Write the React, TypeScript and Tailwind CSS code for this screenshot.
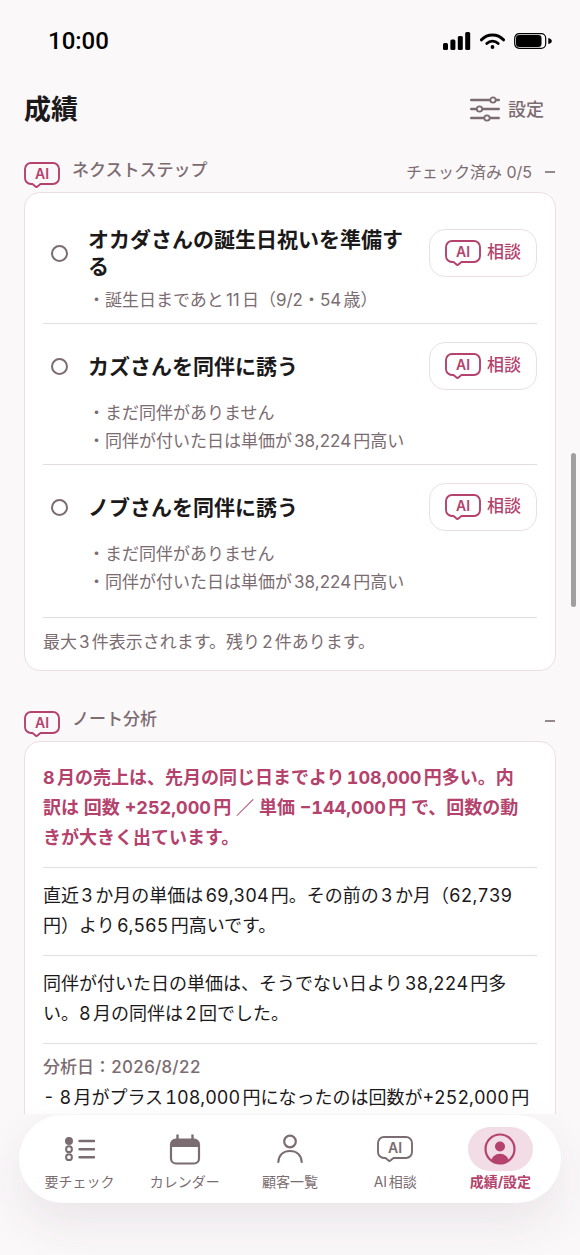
import { useState } from 'react'
import type { ReactNode } from 'react'

type Task = { id: string; title: string; notes: string[] }

const tasks: Task[] = [
  { id: 'birthday', title: 'オカダさんの誕生日祝いを準備する', notes: ['・誕生日まであと11日（9/2・54歳）'] },
  { id: 'kazu', title: 'カズさんを同伴に誘う', notes: ['・まだ同伴がありません', '・同伴が付いた日は単価が38,224円高い'] },
  { id: 'nobu', title: 'ノブさんを同伴に誘う', notes: ['・まだ同伴がありません', '・同伴が付いた日は単価が38,224円高い'] },
]

function AiBubble() {
  return (
    <svg width="36" height="26" viewBox="0 0 36 26" fill="none" className="shrink-0" aria-hidden="true">
      <path
        d="M7 1h22a6 6 0 0 1 6 6v9a6 6 0 0 1-6 6H16.500l-3.400 2.800a1 1 0 0 1-1.300 0L8.500 22H7a6 6 0 0 1-6-6V7a6 6 0 0 1 6-6Z"
        stroke="currentColor"
        strokeWidth="1.900"
        strokeLinejoin="round"
      />
      <text x="18" y="16.500" textAnchor="middle" fill="currentColor" className="text-[14px] font-semibold">AI</text>
    </svg>
  )
}

function StatusBar() {
  return (
    <div className="flex h-20 shrink-0 items-center justify-between pr-7 pl-12 pt-0.5 text-black">
      <span className="font-['Roboto',sans-serif] text-[24px] leading-8 font-medium">10:00</span>
      <div className="flex items-center gap-[9px]">
        <svg width="28" height="18" viewBox="0 0 28 18" fill="currentColor" aria-hidden="true">
          <rect x="0" y="11" width="5" height="7" rx="1.500" />
          <rect x="7.400" y="7.500" width="5" height="10.500" rx="1.500" />
          <rect x="14.800" y="4" width="5" height="14" rx="1.500" />
          <rect x="22.200" y="0" width="5" height="18" rx="1.500" />
        </svg>
        <svg width="25" height="16" viewBox="0 0 25 16" fill="none" stroke="currentColor" strokeLinecap="round" aria-hidden="true">
          <path d="M1.500 6.800C7.500.4 17.500.4 23.500 6.800" strokeWidth="3" />
          <path d="M6.800 10.500c3.200-3.100 8.200-3.100 11.400 0" strokeWidth="2.800" />
          <circle cx="12.500" cy="14" r="1.900" fill="currentColor" stroke="none" />
        </svg>
        <svg width="38" height="16" viewBox="0 0 38 16" fill="none" aria-hidden="true">
          <rect x=".7" y=".7" width="31" height="14.600" rx="4.500" stroke="currentColor" strokeWidth="1.200" />
          <rect x="2" y="2" width="25.500" height="12" rx="3.200" fill="currentColor" />
          <path d="M34.300 5c2.200.5 3.500 1.500 3.500 3s-1.300 2.500-3.500 3Z" fill="currentColor" />
        </svg>
      </div>
    </div>
  )
}

function SectionHeader({ title, extra, open, onToggle }: { title: string; extra?: string; open: boolean; onToggle: () => void }) {
  return (
    <div className="mb-1 flex h-[30px] items-start gap-3">
      <span className="self-end text-[#b4426c]">
        <AiBubble />
      </span>
      <h2 className="flex-1 text-[17px] leading-6 font-medium">{title}</h2>
      <button type="button" onClick={onToggle} aria-expanded={open} aria-label={`${title}を開閉`} className="flex h-7 items-center gap-3">
        {extra && <span className="text-[16px] leading-6">{extra}</span>}
        <svg width="12" height="12" viewBox="0 0 12 12" stroke="currentColor" strokeWidth="1.600" aria-hidden="true">
          <path d={open ? 'M1 6h10' : 'M1 6h10M6 1v10'} />
        </svg>
      </button>
    </div>
  )
}

function TaskRow({ task, last }: { task: Task; last: boolean }) {
  return (
    <li className={last ? 'pt-[15px] pb-[9px]' : 'border-b border-[#e4dcdf] pt-[15px] pb-[9px]'}>
      <div className="flex min-h-[54px] items-center">
        <input
          id={task.id}
          type="checkbox"
          className="mr-5 ml-2 size-[17px] shrink-0 appearance-none rounded-full border-2 border-[#7b6c71] checked:bg-[#b4426c]"
        />
        <label htmlFor={task.id} className="mr-3 flex-1 text-[21px] leading-[27px] font-bold text-[#1c191a]">
          {task.title}
        </label>
        <button
          type="button"
          className="flex h-12 shrink-0 items-center gap-1.5 rounded-2xl border border-[#ecdfe4] px-[15px] text-[17px] font-medium text-[#b4426c]"
        >
          <AiBubble />
          相談
        </button>
      </div>
      <div className="mt-1.5 ml-[45px] text-[17px] leading-7">
        {task.notes.map((note) => (
          <p key={note}>{note}</p>
        ))}
      </div>
    </li>
  )
}

function ChecklistIcon() {
  return (
    <svg width="32" height="26" viewBox="0 0 32 26" fill="none" stroke="currentColor" strokeWidth="2" aria-hidden="true">
      <circle cx="5" cy="5" r="3" fill="currentColor" />
      <circle cx="5" cy="13.200" r="2.900" />
      <circle cx="5" cy="21.200" r="2.900" />
      <path d="M15.500 5h14.500M15.500 13.300h14.500M15.500 21.300h14.500" strokeWidth="2.400" strokeLinecap="round" />
    </svg>
  )
}

function CalendarIcon() {
  return (
    <svg width="32" height="32" viewBox="0 0 32 32" fill="none" stroke="currentColor" strokeWidth="2.200" aria-hidden="true">
      <rect x="2" y="6.500" width="28" height="24" rx="5" />
      <path d="M2 14V11a5 5 0 0 1 5-5h18a5 5 0 0 1 5 5v3Z" fill="currentColor" stroke="none" />
      <path d="M8.500 6V1.500M23.500 6V1.500" strokeWidth="2.400" />
    </svg>
  )
}

function PersonIcon() {
  return (
    <svg width="28" height="30" viewBox="0 0 28 30" fill="none" stroke="currentColor" strokeWidth="2.200" strokeLinecap="round" aria-hidden="true">
      <circle cx="14" cy="7.500" r="5.800" />
      <path d="M2.300 28c.6-7 5.300-11 11.700-11s11.100 4 11.700 11" />
    </svg>
  )
}

function ProfileIcon() {
  return (
    <svg width="32" height="32" viewBox="0 0 32 32" aria-hidden="true">
      <clipPath id="face">
        <circle cx="16" cy="16" r="14.500" />
      </clipPath>
      <circle cx="16" cy="16" r="14.500" fill="none" stroke="currentColor" strokeWidth="2.200" />
      <circle cx="16" cy="13.500" r="5" fill="currentColor" />
      <ellipse cx="16" cy="29" rx="9" ry="8.300" fill="currentColor" clipPath="url(#face)" />
    </svg>
  )
}

function Tab({ label, icon, active }: { label: string; icon: ReactNode; active?: boolean }) {
  return (
    <a
      href="#"
      aria-current={active ? 'page' : undefined}
      className={active ? 'flex flex-1 flex-col items-center font-bold text-[#b4426c]' : 'flex flex-1 flex-col items-center'}
    >
      <span className={active ? 'flex h-11 w-[65px] items-center justify-center rounded-full bg-[#f2dde7]' : 'flex h-11 items-center justify-center'}>
        {icon}
      </span>
      <span className="text-[14px] leading-[22px] whitespace-nowrap">{label}</span>
    </a>
  )
}

export default function App() {
  const [stepsOpen, setStepsOpen] = useState(true)
  const [notesOpen, setNotesOpen] = useState(true)

  return (
    <div
      lang="ja"
      className="relative flex h-screen flex-col overflow-hidden bg-[#fbf8fa] font-['Inter','Noto_Sans_CJK_JP',sans-serif] text-[#7b6c71] [text-autospace:normal]"
    >
      <StatusBar />

      <header className="flex h-[58px] shrink-0 items-center justify-between pr-9 pl-6">
        <h1 className="pt-0.5 text-[27px] leading-10 font-bold text-[#1c191a]">成績</h1>
        <button type="button" className="flex items-center gap-2 text-[18px] font-medium">
          <svg width="30" height="26" viewBox="0 0 30 26" stroke="currentColor" strokeWidth="2.400" strokeLinecap="round" aria-hidden="true">
            <path d="M1.200 4h27.600M1.200 13h27.600M1.200 22h27.600" />
            <g fill="#fbf8fa" strokeWidth="1.800">
              <circle cx="23" cy="4" r="2.700" />
              <circle cx="9.500" cy="13" r="2.700" />
              <circle cx="17" cy="22" r="2.700" />
            </g>
          </svg>
          設定
        </button>
      </header>

      <main className="min-h-0 flex-1 overflow-y-auto px-6 pt-5 [scrollbar-width:none]">
        {/* ネクストステップ */}
        <section>
          <SectionHeader title="ネクストステップ" extra="チェック済み 0/5" open={stepsOpen} onToggle={() => setStepsOpen(!stepsOpen)} />
          {stepsOpen && (
            <div className="rounded-2xl border border-[#ecdfe4] bg-white px-[18px] pt-[18px] pb-4">
              <ul>
                {tasks.map((task, i) => (
                  <TaskRow key={task.id} task={task} last={i === tasks.length - 1} />
                ))}
              </ul>
              <p className="mt-3 border-t border-[#e4dcdf] pt-3 text-[17px] leading-6">
                最大3件表示されます。残り2件あります。
              </p>
            </div>
          )}
        </section>

        {/* ノート分析 */}
        <section className="mt-9">
          <SectionHeader title="ノート分析" open={notesOpen} onToggle={() => setNotesOpen(!notesOpen)} />
          {notesOpen && (
            <div className="rounded-2xl border border-[#ecdfe4] bg-white px-[18px] pt-[21px] pb-10 text-[18px] leading-[30px] text-[#1c191a] tabular-nums">
              <p className="border-b border-[#e4dcdf] pb-[14px] font-bold text-[#b4426c]">
                8月の売上は、先月の同じ日までより108,000円多い。内
                <br />
                訳は 回数 +252,000円 ／ 単価 −144,000円 で、回数の動
                <br />
                きが大きく出ています。
              </p>
              <p className="border-b border-[#e4dcdf] pt-[13px] pb-[14px]">
                直近3か月の単価は69,304円。その前の3か月（62,739
                <br />
                円）より6,565円高いです。
              </p>
              <p className="border-b border-[#e4dcdf] pt-[13px] pb-[14px]">
                同伴が付いた日の単価は、そうでない日より38,224円多
                <br />
                い。8月の同伴は2回でした。
              </p>
              <p className="pt-2 text-[17px] font-medium text-[#7b6c71]">分析日：2026/8/22</p>
              <p className="pt-px">- 8月がプラス108,000円になったのは回数が+252,000円</p>
            </div>
          )}
        </section>
      </main>

      {/* Scroll position */}
      <span className="absolute top-[453px] right-1 h-[154px] w-[5px] rounded-full bg-[#a09ea0]" />

      <div className="shrink-0 px-[19px] pt-px pb-[52px]">
        <nav className="flex rounded-full bg-white px-2 pt-3 pb-[10px] shadow-[0_20px_48px_rgba(60,40,50,0.09)]">
          <Tab label="要チェック" icon={<ChecklistIcon />} />
          <Tab label="カレンダー" icon={<CalendarIcon />} />
          <Tab label="顧客一覧" icon={<PersonIcon />} />
          <Tab label="AI相談" icon={<AiBubble />} />
          <Tab label="成績/設定" icon={<ProfileIcon />} active />
        </nav>
      </div>
    </div>
  )
}
